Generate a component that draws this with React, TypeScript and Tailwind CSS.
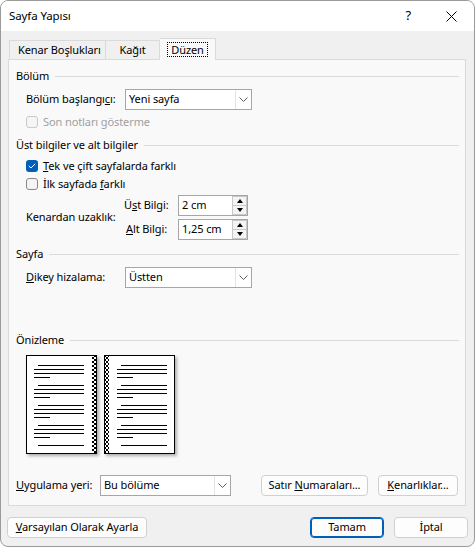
import React from 'react'

const font = "font-['Segoe_UI','Noto_Sans',sans-serif]"

function Section({ label }: { label: string }) {
  return (
    <div className="flex h-[20px] items-center pr-[6px]">
      <span>{label}</span>
      <div className="ml-[6px] h-px flex-1 bg-[#dadada]" />
    </div>
  )
}

function Chevron() {
  return (
    <svg width="9" height="5" viewBox="0 0 9 5" className="text-[#5a5a5a]">
      <path d="M0.5 0.5 L4.5 4.5 L8.5 0.5" fill="none" stroke="currentColor" strokeWidth="1" />
    </svg>
  )
}

function Select({ value, className }: { value: string; className: string }) {
  return (
    <div className={`flex h-[21px] items-stretch border border-[#a6a6a6] bg-white ${className}`}>
      <div className="flex flex-1 items-center pl-[3px]">{value}</div>
      <div className="flex w-[16px] items-center justify-center border-l border-[#e3e3e3]">
        <Chevron />
      </div>
    </div>
  )
}

function Spin({ value }: { value: string }) {
  return (
    <div className="flex h-[21px] w-[70px] items-stretch border border-[#a6a6a6] bg-white">
      <div className="flex flex-1 items-center pl-[3px]">{value}</div>
      <div className="flex w-[15px] flex-col">
        <div className="flex flex-1 items-center justify-center border border-[#c8c8c8] bg-[#f4f4f4]">
          <div className="h-0 w-0 border-x-[3.5px] border-b-[4px] border-x-transparent border-b-black" />
        </div>
        <div className="flex flex-1 items-center justify-center border border-t-0 border-[#c8c8c8] bg-[#f4f4f4]">
          <div className="h-0 w-0 border-x-[3.5px] border-t-[4px] border-x-transparent border-t-black" />
        </div>
      </div>
    </div>
  )
}

function Check({ checked, disabled }: { checked?: boolean; disabled?: boolean }) {
  if (checked) {
    return (
      <div className="flex h-[12px] w-[12px] items-center justify-center rounded-[3px] bg-[#005fb8]">
        <svg width="8" height="6" viewBox="0 0 8 6">
          <path d="M0.8 3 L3 5 L7.2 0.8" fill="none" stroke="white" strokeWidth="1" />
        </svg>
      </div>
    )
  }
  return (
    <div
      className={`h-[12px] w-[12px] rounded-[3px] border ${
        disabled ? 'border-[#c9c9c9] bg-[#f5f5f5]' : 'border-[#878787] bg-[#f4f4f4]'
      }`}
    />
  )
}

function Btn({ children, className }: { children: React.ReactNode; className: string }) {
  return (
    <div className={`flex h-[21px] items-center justify-center rounded-[4px] border border-[#d0d0d0] bg-[#fdfdfd] ${className}`}>
      <span>{children}</span>
    </div>
  )
}

function Page({ side }: { side: 'left' | 'right' }) {
  const groups = [0, 1, 2, 3]
  const base = side === 'left' ? 8 : 13
  const strip = side === 'left' ? 66 : 1
  return (
    <svg width="71" height="99" viewBox="0 0 71 99" className="shadow-[2px_2px_3px_rgba(0,0,0,0.3)]">
      <defs>
        <pattern id={`ck-${side}`} width="4" height="4" patternUnits="userSpaceOnUse">
          <rect width="4" height="4" fill="white" />
          <rect width="2" height="2" fill="black" />
          <rect x="2" y="2" width="2" height="2" fill="black" />
        </pattern>
      </defs>
      <rect x="0.5" y="0.5" width="70" height="98" fill="white" stroke="black" />
      <rect x={strip} y="1" width="4" height="97" fill={`url(#ck-${side})`} />
      <g stroke="black" strokeWidth="1">
        {groups.map((g) => {
          const y = 10.5 + g * 20
          return (
            <g key={g}>
              <line x1={base + 4} x2={base + 50} y1={y} y2={y} />
              <line x1={base} x2={base + 50} y1={y + 4} y2={y + 4} />
              <line x1={base} x2={base + 50} y1={y + 8} y2={y + 8} />
              <line x1={base} x2={base + 16} y1={y + 12} y2={y + 12} />
            </g>
          )
        })}
        <line x1={base + 4} x2={base + 50} y1={90.5} y2={90.5} />
      </g>
    </svg>
  )
}

export default function App() {
  return (
    <div className={`${font} h-[547px] w-[475px] overflow-hidden whitespace-nowrap rounded-lg border border-[#9a9a9a] bg-[#f0f0f0] text-[11px] tracking-[-0.1px] text-black`}>
      {/* Title bar */}
      <div className="flex h-[30px] items-center bg-white">
        <span className="ml-[8px] flex-1 text-[11.5px]">Sayfa Yapısı</span>
        <span className="mr-[35px] text-[13px]">?</span>
        <svg width="11" height="11" viewBox="0 0 11 11" className="mr-[17px]">
          <path d="M0.5 0.5 L10.5 10.5 M10.5 0.5 L0.5 10.5" stroke="black" strokeWidth="1" />
        </svg>
      </div>

      {/* Tabs */}
      <div className="ml-[8px] mt-[7px] flex h-[21px] items-end">
        <div className="flex h-[19px] w-[97px] items-center border border-b-0 border-[#dadada] pl-[8px]">Kenar Boşlukları</div>
        <div className="flex h-[19px] w-[54px] items-center justify-center border border-b-0 border-l-0 border-[#dadada]">Kağıt</div>
        <div className="relative z-10 -mb-px flex h-[22px] w-[56px] items-center justify-center border border-b-0 border-l-0 border-[#dadada] bg-[#f9f9f9]">
          <span className="border border-dotted border-black px-[3px] leading-[13px]">Düzen</span>
        </div>
      </div>

      {/* Panel */}
      <div className="ml-[7px] flex h-[447px] w-[458px] flex-col border border-[#dadada] bg-[#f9f9f9] pl-[7px] pt-[6px]">
        <Section label="Bölüm" />
        <div className="mt-[3px] flex h-[21px] items-center pl-[10px]">
          <span className="w-[99px]">
            Bölüm başlangı<u>c</u>ı:
          </span>
          <Select value="Yeni sayfa" className="w-[127px]" />
        </div>
        <div className="mt-[2px] flex h-[20px] items-center gap-[5px] pl-[10px] text-[#a0a0a0]">
          <Check disabled />
          <span>Son notları gösterme</span>
        </div>

        <div className="mt-[3px]">
          <Section label="Üst bilgiler ve alt bilgiler" />
        </div>
        <div className="mt-[2px] flex h-[18px] items-center gap-[5px] pl-[10px]">
          <Check checked />
          <span>
            <u>T</u>ek ve çift sayfalarda farklı
          </span>
        </div>
        <div className="flex h-[18px] items-center gap-[5px] pl-[10px]">
          <Check />
          <span>
            İlk sayfada <u>f</u>arklı
          </span>
        </div>
        <div className="mt-[2px] flex items-center pl-[10px]">
          <span className="w-[98px]">Kenardan uzaklık:</span>
          <div className="flex flex-col gap-[3px]">
            <div className="flex h-[21px] items-center">
              <span className="w-[54px]">
                Ü<u>s</u>t Bilgi:
              </span>
              <Spin value="2 cm" />
            </div>
            <div className="flex h-[21px] items-center">
              <span className="w-[54px] pl-[2px]">
                <u>A</u>lt Bilgi:
              </span>
              <Spin value="1,25 cm" />
            </div>
          </div>
        </div>

        <div className="mt-[4px]">
          <Section label="Sayfa" />
        </div>
        <div className="mt-[3px] flex h-[21px] items-center pl-[10px]">
          <span className="w-[99px]">
            <u>D</u>ikey hizalama:
          </span>
          <Select value="Üstten" className="w-[127px]" />
        </div>

        <div className="mt-[42px]">
          <Section label="Önizleme" />
        </div>
        <div className="mt-[5px] flex h-[99px] gap-[7px] pl-[10px]">
          <Page side="left" />
          <Page side="right" />
        </div>

        <div className="mt-[21px] flex h-[21px] items-center">
          <span className="w-[84px]">
            <u>U</u>ygulama yeri:
          </span>
          <Select value="Bu bölüme" className="w-[131px]" />
          <Btn className="ml-[30px] w-[107px]">
            Satır <u>N</u>umaraları...
          </Btn>
          <Btn className="ml-[10px] w-[80px]">
            <u>K</u>enarlıklar...
          </Btn>
        </div>
      </div>

      {/* Bottom buttons */}
      <div className="ml-[6px] mr-[6px] mt-[11px] flex h-[21px] items-center">
        <Btn className="w-[140px]">
          <u>V</u>arsayılan Olarak Ayarla
        </Btn>
        <div className="flex-1" />
        <div className="flex h-[21px] w-[74px] items-center justify-center rounded-[4px] border border-[#005fb8] bg-[#fdfdfd] shadow-[inset_0_0_0_1px_#005fb8]">
          Tamam
        </div>
        <Btn className="ml-[10px] w-[74px]">İptal</Btn>
      </div>
    </div>
  )
}
